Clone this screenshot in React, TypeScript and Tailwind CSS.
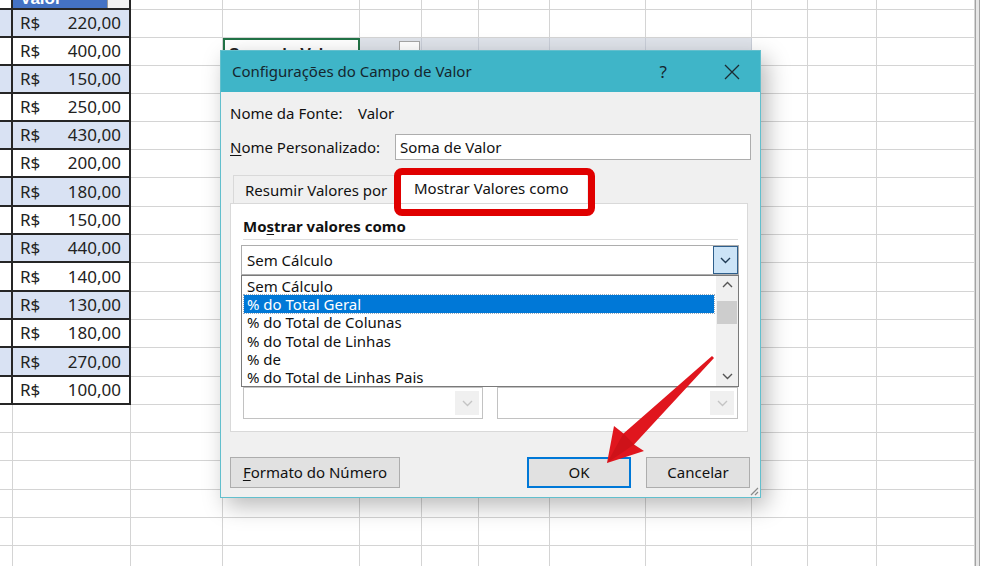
import React from 'react';

const COLS = [13, 118, 92, 137, 62, 57, 71, 96, 106, 56, 69, 98];
const ROWS = [0, 10, 38, 66, 94, 122, 150, 178, 207, 235, 263, 292, 320, 348, 377, 405, 433, 461, 490, 518, 546, 574];
const VALUES = ['220,00', '400,00', '150,00', '250,00', '430,00', '200,00', '180,00', '150,00', '440,00', '140,00', '130,00', '180,00', '270,00', '100,00'];
const ITEMS = ['Sem Cálculo', '% do Total Geral', '% do Total de Colunas', '% do Total de Linhas', '% de', '% do Total de Linhas Pais'];

const Chevron = ({ color = '#333', up = false }: { color?: string; up?: boolean }) => (
  <svg width="11" height="7" viewBox="0 0 11 7">
    <path d={up ? 'M1 6 L5.5 1.5 L10 6' : 'M1 1 L5.5 5.5 L10 1'} fill="none" stroke={color} strokeWidth="1.4" />
  </svg>
);

function SheetCell({ r, c }: { r: number; c: number }) {
  const w = COLS[c];
  const inTable = c <= 1 && r >= 1 && r <= 14;

  if (r === 0) {
    if (c === 0) return <div style={{ width: w }} className="h-full border-r-2 border-b-2 border-[#262626] bg-white" />;
    if (c === 1)
      return (
        <div style={{ width: w }} className="h-full flex border-r-2 border-b-2 border-[#262626] overflow-hidden">
          <div className="flex-1 bg-[#4472c4] pl-[7px] overflow-hidden">
            <div className="-mt-[11px] leading-[20px] text-[17px] font-bold text-white">Valor</div>
          </div>
          <div className="w-[22px] bg-[#f2f2f2] border-l border-[#9a9a9a]" />
        </div>
      );
  }

  if (inTable) {
    const band = r % 2 === 1;
    return (
      <div
        style={{ width: w }}
        className={`h-full border-r-2 border-b-2 border-[#262626] flex items-center ${band ? 'bg-[#d9e2f3]' : 'bg-white'}`}
      >
        {c === 1 && (
          <div className="flex-1 flex justify-between pl-[7px] pr-[8px] text-[17px] text-[#222] font-['Noto_Sans',sans-serif]">
            <span>R$</span>
            <span>{VALUES[r - 1]}</span>
          </div>
        )}
      </div>
    );
  }

  if (r === 2 && c === 3) {
    return (
      <div style={{ width: w }} className="h-full border-2 border-[#217346] pl-[4px] pt-[3px] text-[16px] font-bold text-[#222]">
        Soma de Valor
      </div>
    );
  }
  if (r === 2 && c >= 4 && c <= 8) {
    return (
      <div style={{ width: w }} className="h-full border-r border-b border-[#c9ced8] bg-[#dfe3ea]">
        {c === 4 && <div className="ml-[39px] mt-[3px] w-[21px] h-[22px] bg-white border border-[#a6a6a6]" />}
      </div>
    );
  }

  return <div style={{ width: w }} className="h-full border-r border-b border-[#d4d4d4] bg-white" />;
}

function Sheet() {
  return (
    <div className="flex">
      <div className="flex flex-col w-[975px] font-['Liberation_Sans',sans-serif]">
        {ROWS.slice(0, -1).map((top, r) => (
          <div key={r} style={{ height: ROWS[r + 1] - top }} className="flex">
            {COLS.map((_, c) => (
              <SheetCell key={c} r={r} c={c} />
            ))}
          </div>
        ))}
      </div>
      <div className="w-[5px] h-[566px] border-x border-[#a3a3a3] bg-[#e6e6e6]" />
      <div className="flex-1 bg-white" />
    </div>
  );
}

function Dialog() {
  return (
    <div className="absolute left-[220px] top-[50px] w-[541px] h-[448px] border border-[#62bfcd] bg-[#f0f0f0] shadow-[6px_8px_22px_rgba(0,0,0,0.28)] flex flex-col font-['Noto_Sans',sans-serif] text-[15px] text-[#111]">
      {/* title bar */}
      <div className="h-[41px] bg-[#3fb5c8] flex items-center pl-[11px] text-[#15262e]">
        <span className="flex-1">Configurações do Campo de Valor</span>
        <span className="mr-[57px] text-[17px]">?</span>
        <svg width="16" height="16" viewBox="0 0 16 16" className="mr-[20px]">
          <path d="M1 1 L15 15 M15 1 L1 15" stroke="#1c2b33" strokeWidth="1.3" />
        </svg>
      </div>

      <div className="flex flex-col px-[9px]">
        <div className="mt-[11px] h-[20px] flex items-center">
          <span className="w-[128px]">Nome da Fonte:</span>
          <span>Valor</span>
        </div>
        <div className="mt-[11px] h-[26px] flex items-center">
          <span className="w-[165px]">
            <span className="underline underline-offset-2">N</span>ome Personalizado:
          </span>
          <div className="flex-1 h-full bg-white border border-[#adadad] flex items-center pl-[4px]">Soma de Valor</div>
        </div>

        {/* tabs */}
        <div className="mt-[12px] h-[31px] flex items-end">
          <div className="ml-[3px] w-[168px] h-[28px] border-t border-l border-[#d9d9d9] flex items-center pl-[11px] pt-[2px]">
            Resumir Valores por
          </div>
          <div className="w-[186px] h-[31px] bg-white flex items-center pl-[13px] pt-[2px]">Mostrar Valores como</div>
        </div>

        <div className="w-[518px] h-[229px] bg-white border border-[#d9d9d9] flex flex-col">
          <div className="mt-[12px] ml-[12px] h-[20px] flex items-center font-bold">
            Mo<span className="underline underline-offset-2">s</span>trar valores como
          </div>
          <div className="mt-[3px] ml-[12px] mr-[9px] h-px bg-[#dcdcdc]" />

          {/* combo */}
          <div className="mt-[5px] ml-[10px] w-[498px] h-[30px] bg-white border border-[#adadad] flex items-center">
            <span className="flex-1 pl-[5px]">Sem Cálculo</span>
            <div className="w-[25px] h-full bg-[#cce4f7] border border-[#2e5f8c] flex items-center justify-center">
              <Chevron color="#1f3b55" />
            </div>
          </div>

          {/* list */}
          <div className="ml-[10px] w-[498px] h-[112px] bg-white border border-[#7a7a7a] flex">
            <div className="flex-1 flex flex-col pt-[1px] pl-[2px] pr-[2px]">
              {ITEMS.map((it, i) => (
                <div
                  key={it}
                  className={`h-[18.4px] leading-[18px] pl-[3px] whitespace-nowrap ${
                    i === 1 ? 'bg-[#0078d7] text-white outline-1 outline-dotted outline-[#9ab]' : ''
                  }`}
                >
                  {it}
                </div>
              ))}
            </div>
            <div className="w-[22px] bg-[#f0f0f0] flex flex-col items-center">
              <div className="h-[17px] flex items-center">
                <Chevron color="#555" up />
              </div>
              <div className="mt-[8px] w-[20px] h-[23px] bg-[#cdcdcd]" />
              <div className="flex-1" />
              <div className="h-[20px] flex items-center">
                <Chevron color="#555" />
              </div>
            </div>
          </div>

          {/* disabled combos */}
          <div className="ml-[12px] flex gap-[14px]">
            <div className="w-[240px] h-[32px] bg-white border border-[#c2c2c2] flex justify-end p-[3px]">
              <div className="w-[24px] h-full bg-[#f0f0f0] flex items-center justify-center">
                <Chevron color="#c4c4c4" />
              </div>
            </div>
            <div className="w-[241px] h-[32px] bg-white border border-[#c2c2c2] flex justify-end p-[3px]">
              <div className="w-[24px] h-full bg-[#f0f0f0] flex items-center justify-center">
                <Chevron color="#c4c4c4" />
              </div>
            </div>
          </div>
        </div>

        {/* buttons */}
        <div className="mt-[25px] h-[31px] flex">
          <div className="w-[170px] h-full bg-[#e1e1e1] border border-[#adadad] flex items-center justify-center">
            <span>
              <span className="underline underline-offset-2">F</span>ormato do Número
            </span>
          </div>
          <div className="flex-1" />
          <div className="w-[104px] h-full bg-[#e1e1e1] border-2 border-[#0078d7] flex items-center justify-center">OK</div>
          <div className="ml-[15px] mr-[1px] w-[104px] h-full bg-[#e1e1e1] border border-[#adadad] flex items-center justify-center">
            Cancelar
          </div>
        </div>
      </div>

      {/* red highlight around tab */}
      <div className="absolute left-[173px] top-[117px] w-[201px] h-[48px] border-[7px] border-[#e00000] rounded-[8px]" />

      {/* resize grip */}
      <svg width="11" height="11" viewBox="0 0 11 11" className="absolute right-[1px] bottom-[1px]">
        <path d="M10 3 L3 10 M10 7 L7 10" stroke="#8a8a8a" strokeWidth="1.2" />
      </svg>
    </div>
  );
}

export default function App() {
  return (
    <div className="relative w-[984px] h-[566px] overflow-hidden bg-white">
      <Sheet />
      <Dialog />
      <svg width="984" height="566" className="absolute left-0 top-0 pointer-events-none">
        <polygon
          points="607,463 614,426 623.5,433.5 712,356 714,358 634,444.5 644,451"
          fill="#e0161e"
        />
        <polygon points="607,463 623.5,433.5 634,444.5" fill="#b80d14" opacity="0.45" />
      </svg>
    </div>
  );
}
